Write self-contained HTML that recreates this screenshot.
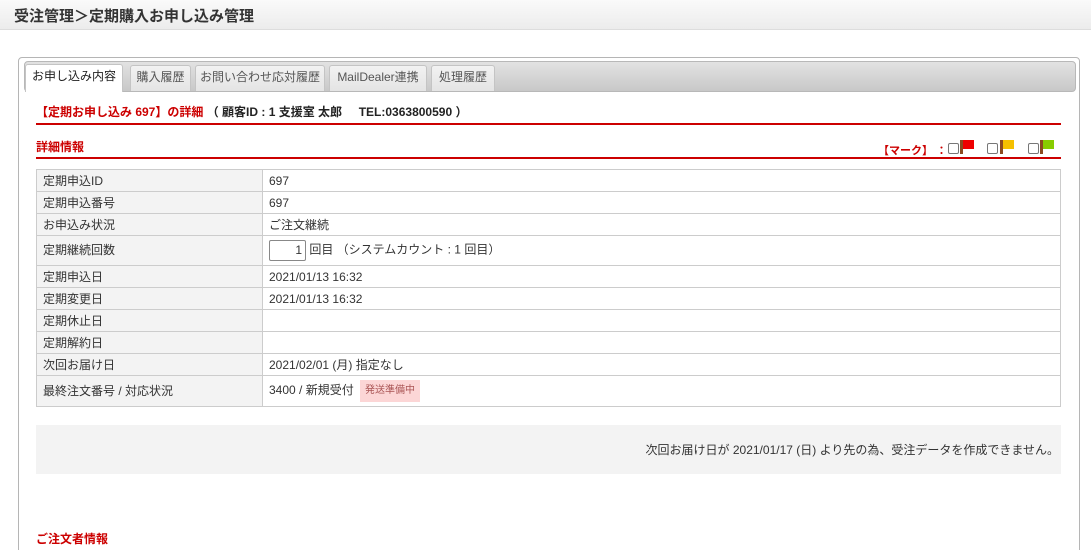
<!DOCTYPE html>
<html><head><meta charset="utf-8"><style>
*{margin:0;padding:0;box-sizing:border-box}
html,body{width:1091px;height:550px;overflow:hidden}
body{background:#fff;font-family:"Liberation Sans","Noto Sans CJK JP",sans-serif;font-size:12px;color:#333;position:relative}
.a{position:absolute;white-space:nowrap}
#hd{left:0;top:0;width:1091px;height:30px;background:linear-gradient(#fafafa,#ececec);border-bottom:1px solid #ddd}
#hd span{position:absolute;left:14px;top:5px;font-size:15px;font-weight:bold;color:#333}
#panel{left:18px;top:57px;width:1062px;height:520px;border:1px solid #b5b5b5;border-radius:4px}
#tabbar{left:24px;top:61px;width:1052px;height:31px;background:linear-gradient(#e2e2e2,#c8c8c8);border:1px solid #b8b8b8;border-radius:4px}
.tab{position:absolute;top:65px;height:26px;background:linear-gradient(#f2f2f2,#e4e4e4);border:1px solid #c4c4c4;border-bottom:none;border-radius:3px 3px 0 0;font-size:12px;color:#555;text-align:center;line-height:22px}
.tab.on{background:#fff;color:#222;top:64px;height:28px}
.red{color:#c00;font-weight:bold}
.rl{position:absolute;left:36px;width:1025px;height:2px;background:#c00}
table{position:absolute;left:36px;top:169px;width:1025px;border-collapse:collapse}
td{border:1px solid #ccc;padding:0 6px;height:22px;font-size:12px;color:#333;vertical-align:middle}
td.l{background:#f3f3f3;width:226px}
.inp{display:inline-block;width:37px;height:21px;border:1px solid #888;border-radius:2px;text-align:right;padding-right:3px;line-height:19px;vertical-align:middle}
.tag{display:inline-block;background:#fcd6d6;color:#a55;font-size:10px;padding:0 5px;height:22px;line-height:22px;vertical-align:middle;margin-left:3px}
.cb{position:absolute;top:143px;width:11px;height:11px;border:1px solid #777;border-radius:2px}
.fl{position:absolute;top:140px;width:14px;height:14px}
.fl i{position:absolute;left:0;top:0;width:3px;height:14px;background:#8a4a20}
.fl b{position:absolute;left:3px;top:0;width:11px;height:9px}
</style></head><body>
<div id="hd" class="a"><span>受注管理＞定期購入お申し込み管理</span></div>
<div id="panel" class="a"></div>
<div id="tabbar" class="a"></div>
<div class="tab on" style="left:25px;width:98px">お申し込み内容</div>
<div class="tab" style="left:130px;width:61px">購入履歴</div>
<div class="tab" style="left:195px;width:130px">お問い合わせ応対履歴</div>
<div class="tab" style="left:329px;width:98px">MailDealer連携</div>
<div class="tab" style="left:431px;width:64px">処理履歴</div>
<div class="a" style="left:36px;top:103px;font-weight:bold;font-size:12px"><span style="color:#c00">【定期お申し込み 697】の詳細</span> <span style="color:#222">（ 顧客ID : 1 支援室 太郎 &nbsp;&nbsp;&nbsp; TEL:0363800590 ）</span></div>
<div class="rl" style="top:123px"></div>
<div class="a red" style="left:36px;top:138px">詳細情報</div>
<div class="a red" style="left:878px;top:142px;font-size:11px">【マーク】 ：</div>
<span class="cb" style="left:948px"></span><span class="fl" style="left:960px"><i></i><b style="background:#e00"></b></span>
<span class="cb" style="left:987px"></span><span class="fl" style="left:1000px"><i></i><b style="background:#f5c000"></b></span>
<span class="cb" style="left:1028px"></span><span class="fl" style="left:1040px"><i></i><b style="background:#8c0"></b></span>
<div class="rl" style="top:157px"></div>
<table>
<tr><td class="l">定期申込ID</td><td>697</td></tr>
<tr><td class="l">定期申込番号</td><td>697</td></tr>
<tr><td class="l">お申込み状況</td><td>ご注文継続</td></tr>
<tr><td class="l" style="height:30px;vertical-align:top;padding-top:5px">定期継続回数</td><td style="height:30px"><span class="inp">1</span> 回目 （システムカウント : 1 回目）</td></tr>
<tr><td class="l">定期申込日</td><td>2021/01/13 16:32</td></tr>
<tr><td class="l">定期変更日</td><td>2021/01/13 16:32</td></tr>
<tr><td class="l">定期休止日</td><td></td></tr>
<tr><td class="l">定期解約日</td><td></td></tr>
<tr><td class="l">次回お届け日</td><td>2021/02/01 (月) 指定なし</td></tr>
<tr><td class="l" style="height:31px;vertical-align:top;padding-top:6px">最終注文番号 / 対応状況</td><td style="height:31px">3400 / 新規受付 <span class="tag">発送準備中</span></td></tr>
</table>
<div class="a" style="left:36px;top:425px;width:1025px;height:49px;background:#f3f3f3"></div>
<div class="a" style="right:32px;top:441px;font-size:12px;color:#333">次回お届け日が 2021/01/17 (日) より先の為、受注データを作成できません。</div>
<div class="a red" style="left:36px;top:530px">ご注文者情報</div>
</body></html>
